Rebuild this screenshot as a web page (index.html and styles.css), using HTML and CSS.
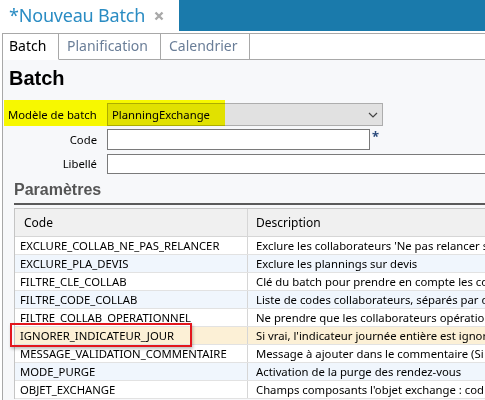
FILE: index.html
```html
<!DOCTYPE html>
<html lang="fr">
<head>
<meta charset="utf-8">
<link rel="stylesheet" href="styles.css">
</head>
<body>
<div class="topbar">
  <div class="doctab">
    <span class="doctitle">*Nouveau Batch</span>
    <svg class="close" width="10" height="10" viewBox="0 0 10 10"><path d="M1.5 1.5 L8.5 8.5 M8.5 1.5 L1.5 8.5" stroke="#a9a9a9" stroke-width="2.4"/></svg>
  </div>
  <div class="bluebar"></div>
</div>
<div class="window">
  <div class="tabs">
    <div class="tab active">Batch</div>
    <div class="tab">Planification</div>
    <div class="tab">Calendrier</div>
    <div class="tabfill"></div>
  </div>
  <div class="content">
    <h1 class="title">Batch</h1>
    <div class="form">
      <div class="row row-select">
        <div class="label">Modèle de batch</div>
        <div class="select">
          <span>PlanningExchange</span>
          <svg class="chev" width="10" height="6" viewBox="0 0 10 6"><path d="M1 1 L5 5 L9 1" fill="none" stroke="#444" stroke-width="1.2"/></svg>
        </div>
        <div class="highlight"></div>
      </div>
      <div class="row">
        <div class="label">Code</div>
        <div class="input code"></div>
        <span class="req">*</span>
      </div>
      <div class="row">
        <div class="label">Libellé</div>
        <div class="input wide"></div>
      </div>
    </div>
    <h2 class="section">Paramètres</h2>
    <div class="table">
      <div class="tr head"><div class="c1">Code</div><div class="c2">Description</div></div>
      <div class="tr"><div class="c1">EXCLURE_COLLAB_NE_PAS_RELANCER</div><div class="c2">Exclure les collaborateurs 'Ne pas relancer s</div></div>
      <div class="tr alt"><div class="c1">EXCLURE_PLA_DEVIS</div><div class="c2">Exclure les plannings sur devis</div></div>
      <div class="tr"><div class="c1">FILTRE_CLE_COLLAB</div><div class="c2">Clé du batch pour prendre en compte les co</div></div>
      <div class="tr alt"><div class="c1">FILTRE_CODE_COLLAB</div><div class="c2">Liste de codes collaborateurs, séparés par d</div></div>
      <div class="tr"><div class="c1">FILTRE_COLLAB_OPERATIONNEL</div><div class="c2">Ne prendre que les collaborateurs opération</div></div>
      <div class="tr sel"><div class="c1">IGNORER_INDICATEUR_JOUR<span class="redbox"></span></div><div class="c2">Si vrai, l'indicateur journée entière est ignoré</div></div>
      <div class="tr"><div class="c1">MESSAGE_VALIDATION_COMMENTAIRE</div><div class="c2">Message à ajouter dans le commentaire (Si</div></div>
      <div class="tr alt"><div class="c1">MODE_PURGE</div><div class="c2">Activation de la purge des rendez-vous</div></div>
      <div class="tr"><div class="c1">OBJET_EXCHANGE</div><div class="c2">Champs composants l'objet exchange : cod</div></div>
    </div>
  </div>
</div>
</body>
</html>
```
FILE: styles.css
```css
html, body {
  margin: 0;
  padding: 0;
  background: #fff;
  overflow: hidden;
}
body {
  width: 485px;
  height: 400px;
  font-family: "Noto Sans", "Open Sans", sans-serif;
  font-size: 11.3px;
  color: #000;
}
.topbar {
  display: flex;
  height: 31px;
}
.doctab {
  width: 179px;
  display: flex;
  align-items: center;
  padding-left: 9px;
  padding-bottom: 2px;
  box-sizing: border-box;
}
.doctitle {
  font-size: 18px;
  color: #2a8cc3;
  letter-spacing: -0.2px;
}
.close {
  margin-left: 9px;
  margin-top: 2px;
}
.bluebar {
  flex: 1;
  background: #1a7aab;
}
.window {
  margin-top: 2px;
  margin-left: 2px;
  border-left: 1px solid #a8a8a8;
  border-top: 1px solid #a8a8a8;
}
.tabs {
  display: flex;
  height: 26px;
}
.tab {
  font-size: 14px;
  color: #6a7e98;
  line-height: 24px;
  border-right: 1px solid #a8a8a8;
  border-bottom: 1px solid #a8a8a8;
  background: #fff;
  box-sizing: border-box;
  height: 26px;
  white-space: nowrap;
}
.tab:nth-child(1) { width: 56px; padding-left: 6px; }
.tab:nth-child(2) { width: 102px; padding-left: 8px; }
.tab:nth-child(3) { width: 89px; padding-left: 8px; }
.tab.active {
  color: #000;
  border-bottom-color: #fff;
}
.tabfill {
  flex: 1;
  border-bottom: 1px solid #a8a8a8;
  height: 26px;
  box-sizing: border-box;
}
.content {
  background: #f7f8fa;
  height: 340px;
  padding-left: 5px;
}
.title {
  margin: 0;
  padding-top: 6px;
  font-family: "Liberation Sans", Arial, sans-serif;
  font-weight: bold;
  font-size: 20px;
  line-height: 24px;
  padding-left: 1px;
}
.form {
  margin-top: 13px;
  display: flex;
  flex-direction: column;
  gap: 3px;
}
.row {
  display: flex;
  align-items: center;
  position: relative;
  height: 21px;
}
.row-select {
  height: 23px;
}
.label {
  width: 89px;
  text-align: right;
  margin-right: 10px;
  white-space: nowrap;
}
.row-select .label {
  text-align: left;
}
.select {
  width: 276px;
  height: 23px;
  box-sizing: border-box;
  background: #e1e1e1;
  border: 1px solid #adadad;
  display: flex;
  align-items: center;
  justify-content: space-between;
  padding: 0 4px 0 4px;
}
.chev { margin-top: 1px; }
.highlight {
  position: absolute;
  left: -4px;
  top: -3px;
  width: 221px;
  height: 26px;
  background: #ffff00;
  mix-blend-mode: multiply;
}
.input {
  height: 21px;
  box-sizing: border-box;
  background: #fff;
  border: 1px solid #7a7a7a;
}
.input.code { width: 263px; }
.input.wide { flex: 1; height: 20px; border-right: none; }
.req {
  color: #2c4b7c;
  font-size: 13px;
  font-weight: bold;
  align-self: flex-start;
  margin-left: 2px;
  line-height: 15px;
}
.section {
  margin: 6px 0 0 6px;
  font-family: "Liberation Sans", Arial, sans-serif;
  font-weight: bold;
  font-size: 16px;
  line-height: 19px;
  color: #555;
  border-bottom: 2px solid #5a5a5a;
  padding-bottom: 4px;
}
.table {
  margin: 3px 0 0 6px;
  border-left: 1px solid #c4c4c4;
  border-top: 1px solid #c4c4c4;
}
.tr {
  display: flex;
  height: 18px;
  line-height: 17px;
  border-bottom: 1px solid #e2e2e2;
  box-sizing: border-box;
  background: #fff;
  white-space: nowrap;
}
.tr.head {
  height: 28px;
  line-height: 27px;
  font-size: 12px;
  background: #f0f0f0;
  border-bottom: 1px solid #d6d6d6;
}
.tr.alt { background: #f0f6fd; }
.tr.sel { background: #fcf0d6; }
.c1 {
  width: 233px;
  flex: none;
  box-sizing: border-box;
  padding-left: 5px;
  border-right: 1px solid #d6d6d6;
  position: relative;
}
.head .c1 { padding-left: 9px; }
.c2 {
  padding-left: 8px;
  overflow: hidden;
}
.redbox {
  position: absolute;
  left: -5px;
  top: -4px;
  width: 182px;
  height: 24px;
  box-sizing: border-box;
  border: 2px solid #e3161d;
  box-shadow: 1px 2px 3px rgba(0,0,0,0.25);
}
```
